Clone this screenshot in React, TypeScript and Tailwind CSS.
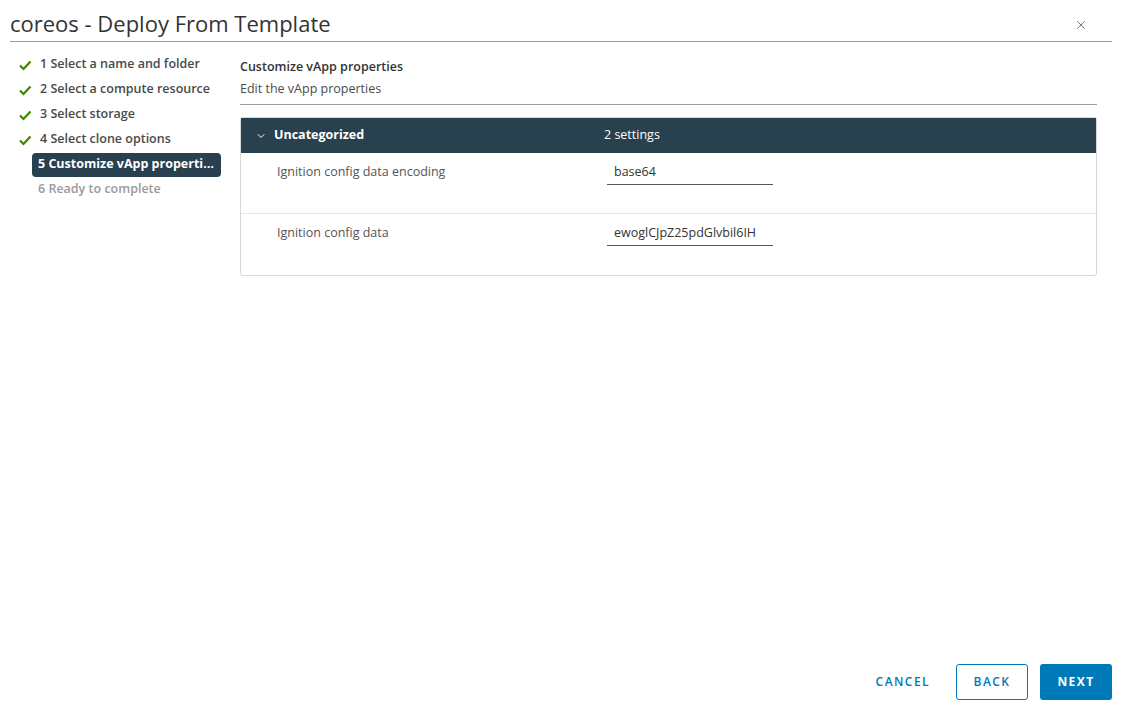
import { ChevronDown, X } from 'lucide-react'

const steps = [
  { n: 1, label: 'Select a name and folder', state: 'done' },
  { n: 2, label: 'Select a compute resource', state: 'done' },
  { n: 3, label: 'Select storage', state: 'done' },
  { n: 4, label: 'Select clone options', state: 'done' },
  { n: 5, label: 'Customize vApp properties', state: 'active' },
  { n: 6, label: 'Ready to complete', state: 'todo' },
]

const settings = [
  { label: 'Ignition config data encoding', value: 'base64' },
  { label: 'Ignition config data', value: 'ewoglCJpZ25pdGlvbil6IH' },
]

function Check() {
  return (
    <svg width="14" height="14" viewBox="0 0 14 14" className="shrink-0">
      <path d="M2 7.5 L5.5 11 L12.5 3.5" fill="none" stroke="#3c8500" strokeWidth="2.2" />
    </svg>
  )
}

function App() {
  return (
    <div className="flex h-[710px] w-[1130px] flex-col bg-white font-['Open_Sans',sans-serif] text-[#333]">
      <header className="mx-[10px] mr-[18px] flex h-[42px] items-center justify-between border-b border-[#9c9c9c]">
        <h1 className="pt-[5px] text-[22px] leading-none text-[#333]">coreos - Deploy From Template</h1>
        <X size={14} strokeWidth={1.5} className="mr-[24px] mt-[8px] text-[#666]" />
      </header>

      <div className="flex flex-1 pt-[10px]">
        <nav className="w-[240px] shrink-0 pl-[16px] pr-[19px]">
          {steps.map((s) => (
            <div key={s.n} className="flex h-[25px] items-center">
              {s.state === 'done' ? (
                <div className="flex h-[24px] items-center gap-[8px] pl-[2px]">
                  <Check />
                  <span className="text-[12.5px] font-semibold text-[#4a4a4a]">
                    {s.n} {s.label}
                  </span>
                </div>
              ) : s.state === 'active' ? (
                <div className="ml-[16px] flex h-[24px] w-[189px] items-center rounded-[4px] bg-[#29414e] px-[6px]">
                  <span className="truncate text-[12.5px] font-bold text-white">
                    {s.n} {s.label}
                  </span>
                </div>
              ) : (
                <span className="pl-[22px] text-[12.5px] font-semibold text-[#9a9a9a]">
                  {s.n} {s.label}
                </span>
              )}
            </div>
          ))}
        </nav>

        <main className="w-[857px] pt-[3px]">
          <div className="border-b border-[#9c9c9c] pb-[5px] pt-[2px]">
            <p className="text-[12.5px] font-semibold leading-[20px] text-[#333]">Customize vApp properties</p>
            <p className="mt-[2px] text-[12.5px] leading-[20px] text-[#4a4a4a]">Edit the vApp properties</p>
          </div>

          <div className="mt-[12px] rounded-[3px] border border-[#d7d7d7]">
            <div className="flex h-[35px] items-center bg-[#29414e] text-[12.5px] font-bold text-white">
              <div className="flex w-[363px] items-center gap-[7px] pl-[14px]">
                <ChevronDown size={12} strokeWidth={2} />
                <span>Uncategorized</span>
              </div>
              <span className="font-normal">2 settings</span>
            </div>
            {settings.map((row, i) => (
              <div
                key={row.label}
                className={`flex h-[61px] items-start pt-[10px] ${i === 0 ? 'border-b border-[#e6e6e6]' : ''}`}
              >
                <span className="w-[366px] pl-[36px] text-[12.5px] text-[#555]">{row.label}</span>
                <div className="w-[166px] overflow-hidden whitespace-nowrap border-b border-[#575757] px-[7px] pb-[2px] text-[12.5px] text-[#333]">
                  {row.value}
                </div>
              </div>
            ))}
          </div>
        </main>
      </div>

      <footer className="flex items-center justify-end gap-[12px] pb-[10px] pr-[18px]">
        <button className="h-[36px] px-[14px] text-[12px] font-semibold tracking-[0.12em] text-[#0079b8]">CANCEL</button>
        <button className="h-[36px] w-[72px] rounded-[3px] border border-[#0079b8] text-[12px] font-semibold tracking-[0.12em] text-[#0079b8]">
          BACK
        </button>
        <button className="h-[36px] w-[72px] rounded-[3px] bg-[#0079b8] text-[12px] font-bold tracking-[0.12em] text-white">
          NEXT
        </button>
      </footer>
    </div>
  )
}

export default App
